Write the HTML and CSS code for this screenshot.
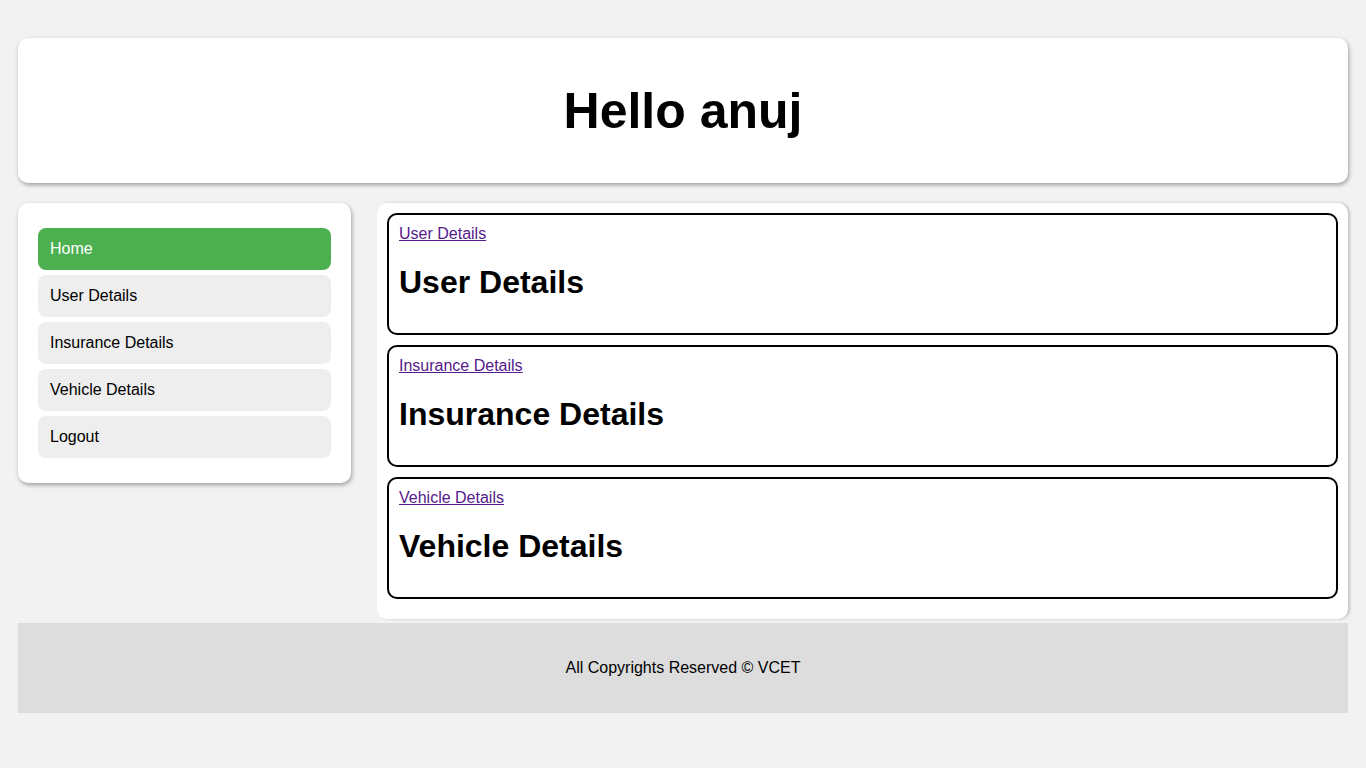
FILE: index.html
```html
<!DOCTYPE html>
<html>
<head>
<meta charset="utf-8">
<title>Dashboard</title>
<link rel="stylesheet" href="styles.css">
</head>
<body>
<div class="page">
  <header class="header">
    <h1 class="title">Hello anuj</h1>
  </header>
  <div class="layout">
    <aside class="sidebar">
      <nav class="nav">
        <a class="nav-item active" href="#">Home</a>
        <a class="nav-item" href="#">User Details</a>
        <a class="nav-item" href="#">Insurance Details</a>
        <a class="nav-item" href="#">Vehicle Details</a>
        <a class="nav-item" href="#">Logout</a>
      </nav>
    </aside>
    <main class="main">
      <section class="card">
        <a class="card-link" href="#">User Details</a>
        <h2 class="card-title">User Details</h2>
      </section>
      <section class="card">
        <a class="card-link" href="#">Insurance Details</a>
        <h2 class="card-title">Insurance Details</h2>
      </section>
      <section class="card">
        <a class="card-link" href="#">Vehicle Details</a>
        <h2 class="card-title">Vehicle Details</h2>
      </section>
    </main>
  </div>
  <footer class="footer">All Copyrights Reserved © VCET</footer>
</div>
</body>
</html>
```

FILE: styles.css
```css
* { box-sizing: border-box; }
html, body {
  margin: 0;
  padding: 0;
  background: #f2f2f2;
  font-family: "Liberation Sans", Arial, sans-serif;
  color: #000;
}
.page {
  padding: 38px 18px 20px 18px;
  display: flex;
  flex-direction: column;
}
.header {
  background: #fff;
  border-radius: 10px;
  height: 145px;
  display: flex;
  align-items: center;
  justify-content: center;
  box-shadow: 1px 2px 4px rgba(0,0,0,0.35);
}
.title {
  margin: 0;
  font-size: 50px;
  font-weight: bold;
  line-height: 56px;
}
.layout {
  margin-top: 20px;
  display: flex;
  justify-content: space-between;
  align-items: flex-start;
}
.sidebar {
  width: 333px;
  background: #fff;
  border-radius: 10px;
  padding: 25px 20px;
  box-shadow: 1px 2px 4px rgba(0,0,0,0.35);
}
.nav {
  display: flex;
  flex-direction: column;
  gap: 5px;
}
.nav-item {
  display: block;
  height: 42px;
  line-height: 42px;
  padding: 0 12px;
  background: #eeeeee;
  border-radius: 8px;
  color: #000;
  text-decoration: none;
  font-size: 16px;
}
.nav-item.active {
  background: #4caf50;
  color: #fff;
}
.main {
  width: 971px;
  background: #fff;
  border-radius: 10px;
  padding: 10px 10px 20px 10px;
  display: flex;
  flex-direction: column;
  gap: 10px;
  box-shadow: 2px 0 3px rgba(0,0,0,0.2);
}
.card {
  border: 2px solid #000;
  border-radius: 10px;
  padding: 10px;
  height: 122px;
}
.card-link {
  display: block;
  font-size: 16px;
  line-height: 18px;
  color: #551a8b;
  text-decoration: underline;
  width: max-content;
}
.card-title {
  margin: 21px 0;
  font-size: 32px;
  line-height: 37px;
  font-weight: bold;
}
.footer {
  margin-top: 4px;
  height: 90px;
  background: #dddddd;
  display: flex;
  align-items: center;
  justify-content: center;
  font-size: 16px;
}
```
